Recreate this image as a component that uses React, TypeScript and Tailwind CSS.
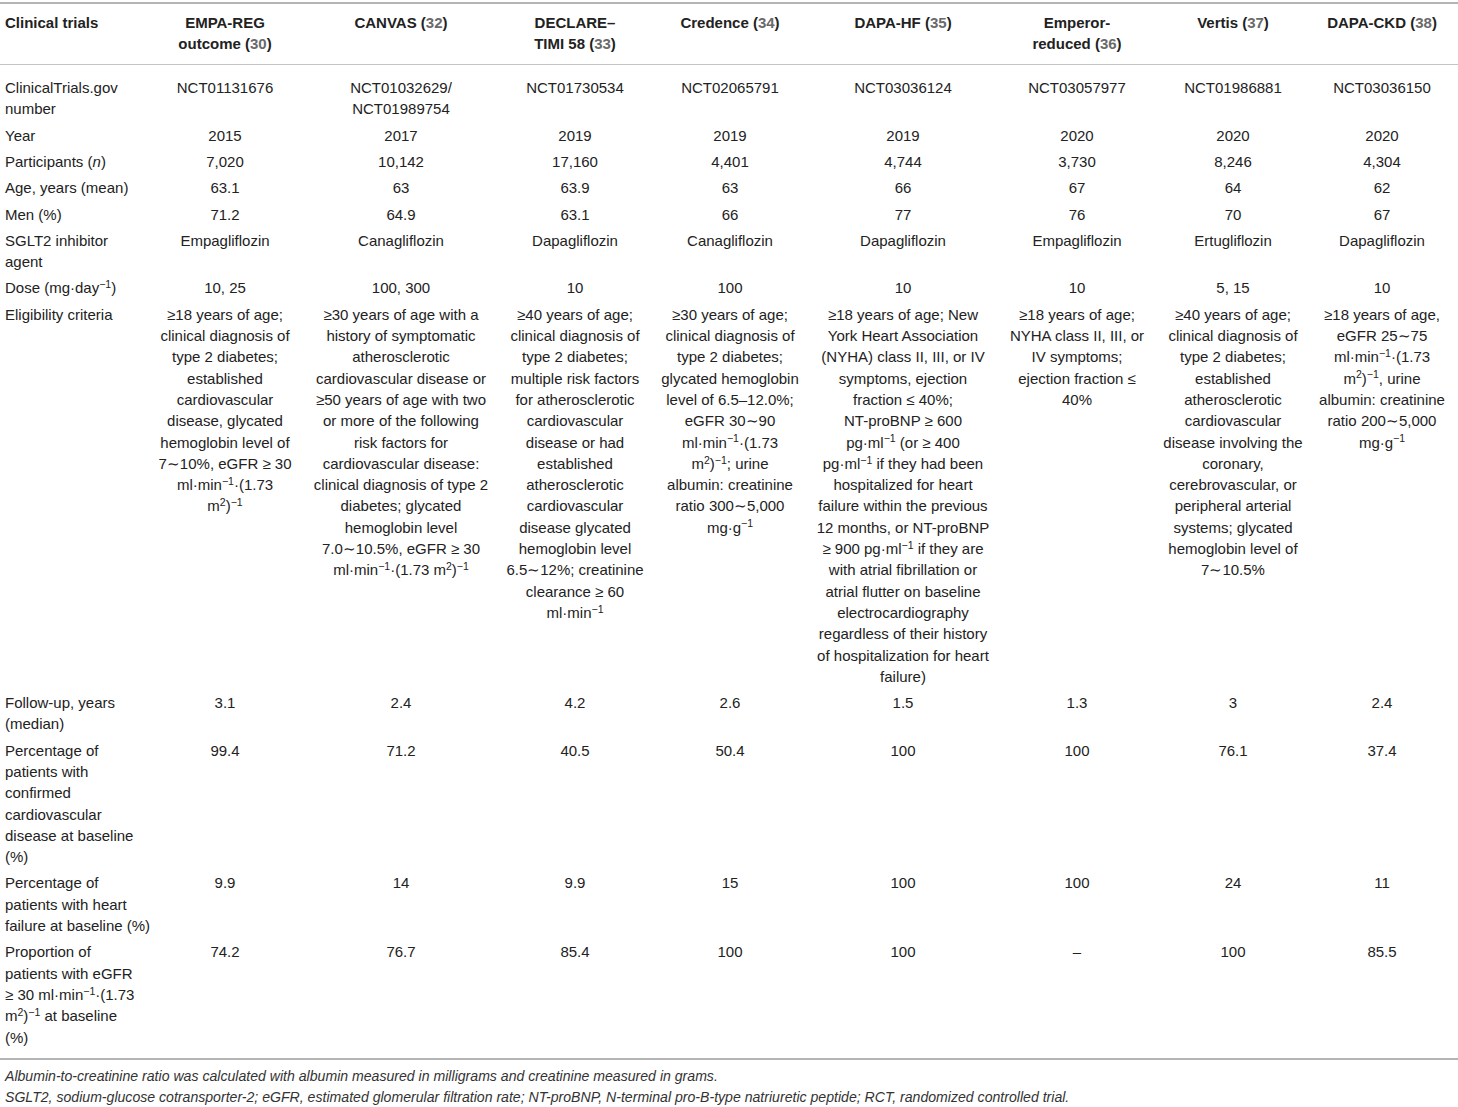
import React from "react";

// Render "^{−1}" markers as superscripts.
function fmt(s: string): React.ReactNode {
  const parts = s.split(/\^\{([^}]*)\}/);
  return parts.map((p, i) =>
    i % 2 === 1 ? (
      <sup key={i} className="text-[10.5px]">
        {p}
      </sup>
    ) : (
      <React.Fragment key={i}>{p}</React.Fragment>
    )
  );
}

const cols = "grid grid-cols-[150px_150px_202px_146px_164px_182px_166px_146px_152px]";

const headers: { lines: string[]; ref: string }[] = [
  { lines: ["EMPA-REG", "outcome"], ref: "30" },
  { lines: ["CANVAS"], ref: "32" },
  { lines: ["DECLARE–", "TIMI 58"], ref: "33" },
  { lines: ["Credence"], ref: "34" },
  { lines: ["DAPA-HF"], ref: "35" },
  { lines: ["Emperor-", "reduced"], ref: "36" },
  { lines: ["Vertis"], ref: "37" },
  { lines: ["DAPA-CKD"], ref: "38" },
];

type Row = { label: React.ReactNode[]; cells: string[][] };

const rows: Row[] = [
  {
    label: ["ClinicalTrials.gov", "number"],
    cells: [
      ["NCT01131676"],
      ["NCT01032629/", "NCT01989754"],
      ["NCT01730534"],
      ["NCT02065791"],
      ["NCT03036124"],
      ["NCT03057977"],
      ["NCT01986881"],
      ["NCT03036150"],
    ],
  },
  {
    label: ["Year"],
    cells: [["2015"], ["2017"], ["2019"], ["2019"], ["2019"], ["2020"], ["2020"], ["2020"]],
  },
  {
    label: [
      <>
        Participants (<i>n</i>)
      </>,
    ],
    cells: [["7,020"], ["10,142"], ["17,160"], ["4,401"], ["4,744"], ["3,730"], ["8,246"], ["4,304"]],
  },
  {
    label: ["Age, years (mean)"],
    cells: [["63.1"], ["63"], ["63.9"], ["63"], ["66"], ["67"], ["64"], ["62"]],
  },
  {
    label: ["Men (%)"],
    cells: [["71.2"], ["64.9"], ["63.1"], ["66"], ["77"], ["76"], ["70"], ["67"]],
  },
  {
    label: ["SGLT2 inhibitor", "agent"],
    cells: [
      ["Empagliflozin"],
      ["Canagliflozin"],
      ["Dapagliflozin"],
      ["Canagliflozin"],
      ["Dapagliflozin"],
      ["Empagliflozin"],
      ["Ertugliflozin"],
      ["Dapagliflozin"],
    ],
  },
  {
    label: [fmt("Dose (mg·day^{−1})")],
    cells: [["10, 25"], ["100, 300"], ["10"], ["100"], ["10"], ["10"], ["5, 15"], ["10"]],
  },
  {
    label: ["Eligibility criteria"],
    cells: [
      [
        "≥18 years of age;",
        "clinical diagnosis of",
        "type 2 diabetes;",
        "established",
        "cardiovascular",
        "disease, glycated",
        "hemoglobin level of",
        "7∼10%, eGFR ≥ 30",
        "ml·min^{−1}·(1.73",
        "m^{2})^{−1}",
      ],
      [
        "≥30 years of age with a",
        "history of symptomatic",
        "atherosclerotic",
        "cardiovascular disease or",
        "≥50 years of age with two",
        "or more of the following",
        "risk factors for",
        "cardiovascular disease:",
        "clinical diagnosis of type 2",
        "diabetes; glycated",
        "hemoglobin level",
        "7.0∼10.5%, eGFR ≥ 30",
        "ml·min^{−1}·(1.73 m^{2})^{−1}",
      ],
      [
        "≥40 years of age;",
        "clinical diagnosis of",
        "type 2 diabetes;",
        "multiple risk factors",
        "for atherosclerotic",
        "cardiovascular",
        "disease or had",
        "established",
        "atherosclerotic",
        "cardiovascular",
        "disease glycated",
        "hemoglobin level",
        "6.5∼12%; creatinine",
        "clearance ≥ 60",
        "ml·min^{−1}",
      ],
      [
        "≥30 years of age;",
        "clinical diagnosis of",
        "type 2 diabetes;",
        "glycated hemoglobin",
        "level of 6.5–12.0%;",
        "eGFR 30∼90",
        "ml·min^{−1}·(1.73",
        "m^{2})^{−1}; urine",
        "albumin: creatinine",
        "ratio 300∼5,000",
        "mg·g^{−1}",
      ],
      [
        "≥18 years of age; New",
        "York Heart Association",
        "(NYHA) class II, III, or IV",
        "symptoms, ejection",
        "fraction ≤ 40%;",
        "NT-proBNP ≥ 600",
        "pg·ml^{−1} (or ≥ 400",
        "pg·ml^{−1} if they had been",
        "hospitalized for heart",
        "failure within the previous",
        "12 months, or NT-proBNP",
        "≥ 900 pg·ml^{−1} if they are",
        "with atrial fibrillation or",
        "atrial flutter on baseline",
        "electrocardiography",
        "regardless of their history",
        "of hospitalization for heart",
        "failure)",
      ],
      ["≥18 years of age;", "NYHA class II, III, or", "IV symptoms;", "ejection fraction ≤", "40%"],
      [
        "≥40 years of age;",
        "clinical diagnosis of",
        "type 2 diabetes;",
        "established",
        "atherosclerotic",
        "cardiovascular",
        "disease involving the",
        "coronary,",
        "cerebrovascular, or",
        "peripheral arterial",
        "systems; glycated",
        "hemoglobin level of",
        "7∼10.5%",
      ],
      [
        "≥18 years of age,",
        "eGFR 25∼75",
        "ml·min^{−1}·(1.73",
        "m^{2})^{−1}, urine",
        "albumin: creatinine",
        "ratio 200∼5,000",
        "mg·g^{−1}",
      ],
    ],
  },
  {
    label: ["Follow-up, years", "(median)"],
    cells: [["3.1"], ["2.4"], ["4.2"], ["2.6"], ["1.5"], ["1.3"], ["3"], ["2.4"]],
  },
  {
    label: [
      "Percentage of",
      "patients with",
      "confirmed",
      "cardiovascular",
      "disease at baseline",
      "(%)",
    ],
    cells: [["99.4"], ["71.2"], ["40.5"], ["50.4"], ["100"], ["100"], ["76.1"], ["37.4"]],
  },
  {
    label: ["Percentage of", "patients with heart", "failure at baseline (%)"],
    cells: [["9.9"], ["14"], ["9.9"], ["15"], ["100"], ["100"], ["24"], ["11"]],
  },
  {
    label: [
      "Proportion of",
      "patients with eGFR",
      fmt("≥ 30 ml·min^{−1}·(1.73"),
      fmt("m^{2})^{−1} at baseline"),
      "(%)",
    ],
    cells: [["74.2"], ["76.7"], ["85.4"], ["100"], ["100"], ["–"], ["100"], ["85.5"]],
  },
];

export default function App() {
  return (
    <div className="min-h-screen bg-white text-[#222] font-['Liberation_Sans',Arial,sans-serif] text-[15px] leading-[21.3px]">
      <div className="pt-[2px]">
        <div className="border-t-2 border-[#b4b4b4]">
          {/* header */}
          <div className={`${cols} border-b border-[#c4c4c4] pt-[8px] pb-[9px] font-bold`}>
            <div className="pl-[5px]">Clinical trials</div>
            {headers.map((h) => (
              <div key={h.ref} className="text-center whitespace-nowrap">
                {h.lines.map((l, i) => (
                  <div key={i}>
                    {l}
                    {i === h.lines.length - 1 && (
                      <>
                        {" "}(<span className="text-[#6a6a6a]">{h.ref}</span>)
                      </>
                    )}
                  </div>
                ))}
              </div>
            ))}
          </div>

          {/* body */}
          <div className="pt-[10px] pb-[8px] border-b-2 border-[#b4b4b4]">
            {rows.map((r, ri) => (
              <div key={ri} className={`${cols} py-[2.5px]`}>
                <div className="pl-[5px] whitespace-nowrap">
                  {r.label.map((l, i) => (
                    <div key={i}>{l}</div>
                  ))}
                </div>
                {r.cells.map((c, ci) => (
                  <div key={ci} className="text-center whitespace-nowrap">
                    {c.map((l, i) => (
                      <div key={i}>{fmt(l)}</div>
                    ))}
                  </div>
                ))}
              </div>
            ))}
          </div>

          {/* footnotes */}
          <div className="pl-[5px] pt-[6px] italic text-[14.1px] leading-[21px] text-[#333]">
            <p>
              Albumin-to-creatinine ratio was calculated with albumin measured in milligrams and creatinine measured in grams.
            </p>
            <p>
              SGLT2, sodium-glucose cotransporter-2; eGFR, estimated glomerular filtration rate; NT-proBNP, N-terminal
              pro-B-type natriuretic peptide; RCT, randomized controlled trial.
            </p>
          </div>
        </div>
      </div>
    </div>
  );
}
